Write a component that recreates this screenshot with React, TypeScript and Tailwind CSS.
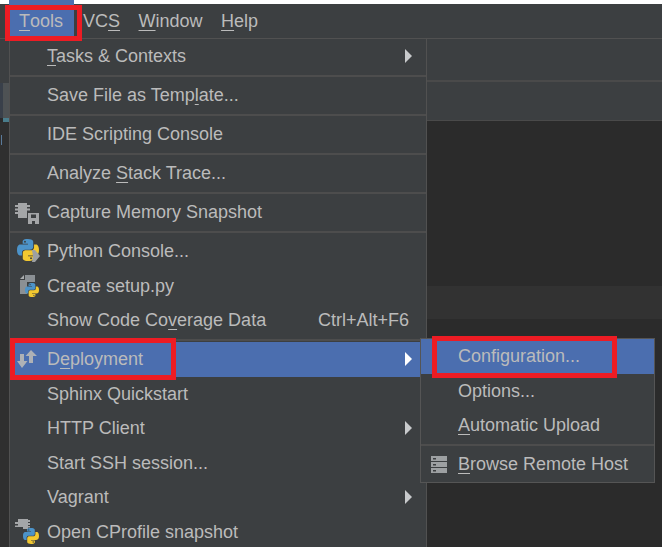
import type { ReactNode } from 'react';

function PythonMark({ x, y, size }: { x: number; y: number; size: number }) {
  const blue = 'M11.9 0C5.8 0 6.2 2.6 6.2 2.6v2.7H12v.8H3.9S0 5.7 0 11.9s3.4 6 3.4 6h2v-2.9s-.1-3.4 3.3-3.4h5.8s3.2.1 3.2-3.1V3.2S18.2 0 11.9 0zM8.7 1.9a1 1 0 1 1 0 2.1 1 1 0 0 1 0-2.1z';
  return (
    <svg x={x} y={y} width={size} height={size} viewBox="0 0 24 24">
      <path d={blue} fill="#4c93c9" fillRule="evenodd" />
      <path d={blue} fill="#f2c830" fillRule="evenodd" transform="rotate(180 12 12)" />
    </svg>
  );
}

function MemoryIcon() {
  return (
    <svg width="24" height="21" viewBox="0 0 24 21" className="-ml-[3px] mt-[3px]">
      <path d="M3 0h9v15H3zM0 2h3v2H0zM0 5.5h3v2H0zM0 9h3v2H0zM12 2h3v2h-3zM12 5.5h3v2h-3z" fill="#a4a6a8" />
      <path d="M12 9h12v12H12z" fill="#3c3f41" />
      <path fillRule="evenodd" d="M13 10h11v11H13zM16 11.5V15h5v-3.5zM17 18v3h3v-3z" fill="#a4a6a8" />
    </svg>
  );
}

function ConsoleIcon() {
  return (
    <svg width="24" height="24" viewBox="0 0 24 24">
      <PythonMark x={0} y={0} size={22} />
      <path d="M15 11h3l5 6-5 6h-3l1-6z" fill="#9da0a2" />
    </svg>
  );
}

function SetupIcon() {
  return (
    <svg width="19" height="22" viewBox="0 0 19 22" className="ml-[1px] mt-[1px]">
      <path d="M5 0h10v7H7v12H0V5h5z" fill="#8b9094" />
      <path d="M0 4l4-4v4z" fill="#a8abad" />
      <PythonMark x={5} y={8} size={14} />
    </svg>
  );
}

function ArrowsIcon() {
  return (
    <svg width="20" height="18" viewBox="0 0 20 18" className="-ml-[3px]">
      <path d="M3 4h4v7h3.5L5 18 0 11h3zM12 13V6H8.5L14 0l6 6h-4v7z" fill="#aeb1b6" />
    </svg>
  );
}

function ProfileIcon() {
  return (
    <svg width="24" height="26" viewBox="0 0 24 26" className="-ml-[3px]">
      <path d="M3 0h10v1h2v2h-2v1h2v2h-2v1h2v1.5h-2V10H8V8H0V6.5h3V5H0V3h3z" fill="#a4a6a8" />
      <PythonMark x={8} y={9} size={16} />
    </svg>
  );
}

function ServerIcon() {
  return (
    <svg width="16" height="17" viewBox="0 0 16 17" className="-ml-[2px]">
      <path fillRule="evenodd" d="M0 0h16v5H0zM2 2v1.5h3V2zM0 6h16v5H0zM2 8v1.5h3V8zM0 12h16v5H0zM2 14v1.5h3V14z" fill="#9da0a2" />
    </svg>
  );
}

function Arrow({ color = 'border-l-[#c8cacc]' }: { color?: string }) {
  return (
    <span
      className={`ml-auto mr-[14px] h-0 w-0 border-y-[7px] border-l-[7px] border-y-transparent ${color}`}
    />
  );
}

function Mn({ children }: { children: ReactNode }) {
  return <span className="underline decoration-1 underline-offset-[3px]">{children}</span>;
}

function Row({
  icon,
  children,
  right,
  active,
}: {
  icon?: ReactNode;
  children: ReactNode;
  right?: ReactNode;
  active?: boolean;
}) {
  return (
    <div className={`flex h-[34.5px] items-center ${active ? 'bg-[#4b6eaf]' : ''}`}>
      <div className="flex w-[37px] shrink-0 items-center justify-center">{icon}</div>
      <span>{children}</span>
      {right}
    </div>
  );
}

function Sep() {
  return (
    <div className="flex h-[4.5px] items-center">
      <div className="h-[2px] w-full bg-[#4d4d4d]" />
    </div>
  );
}

export default function App() {
  return (
    <div className="relative h-[547px] w-[662px] overflow-hidden bg-[#2b2b2b] font-['Liberation_Sans',Arial,sans-serif] text-[18px] leading-none text-[#bbbbbb]">
      <div className="flex h-[4px] bg-white">
        <div className="ml-[9px] h-full w-[65px] bg-[#4b6eaf]" />
      </div>

      {/* menu bar */}
      <div className="flex h-[34px] items-center bg-[#3c3f41]">
        <div className="ml-[9px] flex h-full w-[65px] items-center bg-[#4b6eaf] pl-[10px]">
          <Mn>T</Mn>ools
        </div>
        <div className="ml-[9px] flex gap-[18.5px]">
          <span>VC<Mn>S</Mn></span>
          <span><Mn>W</Mn>indow</span>
          <span><Mn>H</Mn>elp</span>
        </div>
      </div>
      <div className="h-[1px] bg-[#515151]" />

      <div className="flex h-[508px]">
        {/* editor gutter on the left */}
        <div className="flex w-[9px] shrink-0 flex-col">
          <div className="h-[44px] bg-[#3c3f41]" />
          <div className="flex h-[35px]">
            <div className="w-[3px] bg-[#39404a]" />
            <div className="flex-1 bg-[#4e5254]" />
          </div>
          <div className="ml-[3px] h-[4px] bg-[#4a7d8c]" />
          <div className="flex-1 bg-[#2f2f2f]">
            <div className="ml-[1px] mt-[13px] h-[10px] w-[1px] bg-[#5a7a9a]" />
          </div>
        </div>

        {/* Tools menu */}
        <div className="w-[418px] shrink-0 border-x border-[#515151] bg-[#3c3f41]">
          <Row right={<Arrow />}><Mn>T</Mn>asks &amp; Contexts</Row>
          <Sep />
          <Row>Save File as Temp<Mn>l</Mn>ate...</Row>
          <Sep />
          <Row>IDE Scripting Console</Row>
          <Sep />
          <Row>Analyze <Mn>S</Mn>tack Trace...</Row>
          <Sep />
          <Row icon={<MemoryIcon />}>Capture Memory Snapshot</Row>
          <Sep />
          <Row icon={<ConsoleIcon />}>Python Console...</Row>
          <Row icon={<SetupIcon />}>Create setup.py</Row>
          <Row right={<span className="ml-auto mr-[17px]">Ctrl+Alt+F6</span>}>Show Code Co<Mn>v</Mn>erage Data</Row>
          <Sep />
          <Row active icon={<ArrowsIcon />} right={<Arrow color="border-l-white" />}>D<Mn>e</Mn>ployment</Row>
          <Row>Sphinx Quickstart</Row>
          <Row right={<Arrow />}>HTTP Client</Row>
          <Row>Start SSH session...</Row>
          <Row right={<Arrow />}>Vagrant</Row>
          <Row icon={<ProfileIcon />}>Open CProfile snapshot</Row>
        </div>

        {/* what is behind the menu */}
        <div className="flex flex-1 flex-col">
          <div className="h-[43px] border-b-2 border-[#4a4a4a] bg-[#3c3f41]" />
          <div className="h-[39px] border-b border-[#4a4a4a] bg-[#3c3f41]" />
          <div className="h-[165px]" />
          <div className="h-[33px] bg-[#323232]" />
        </div>
      </div>

      {/* Deployment submenu */}
      <div className="absolute left-[420px] top-[338px] w-[235px] border border-[#555555] bg-[#3c3f41]">
        <div className="flex h-[35px] items-center bg-[#4b6eaf] pb-[1px] pl-[37px]">Configuration...</div>
        <div className="flex h-[34.5px] items-center pl-[37px]">Options...</div>
        <div className="flex h-[34.5px] items-center pb-[1px] pl-[37px]"><span><Mn>A</Mn>utomatic Upload</span></div>
        <div className="flex h-[4px] items-center"><div className="h-[2px] w-full bg-[#4d4d4d]" /></div>
        <div className="flex h-[35px] items-center pb-[1px]">
          <div className="flex w-[37px] justify-center"><ServerIcon /></div>
          <span><Mn>B</Mn>rowse Remote Host</span>
        </div>
      </div>

      {/* red highlight boxes */}
      <div className="absolute left-[5px] top-[5px] h-[36px] w-[77px] border-[5px] border-[#ed1c24]" />
      <div className="absolute left-[10px] top-[338px] h-[42px] w-[166px] border-[5px] border-[#ed1c24]" />
      <div className="absolute left-[432px] top-[336px] h-[42px] w-[185px] border-[5px] border-[#ed1c24]" />
    </div>
  );
}
